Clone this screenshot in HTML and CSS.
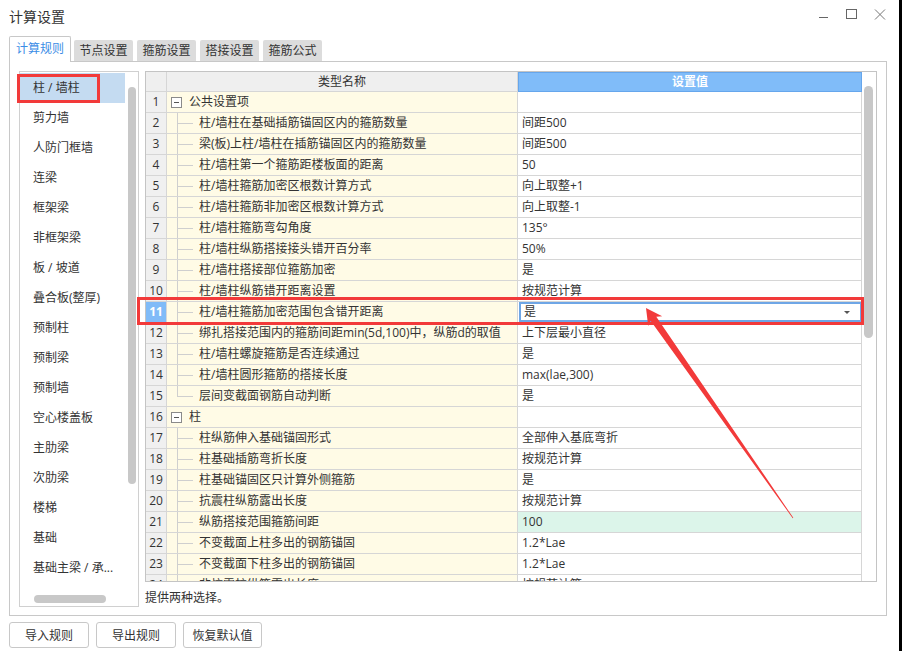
FILE: index.html
```html
<!DOCTYPE html>
<html lang="zh-CN">
<head>
<meta charset="utf-8">
<title>计算设置</title>
<link rel="stylesheet" href="styles.css">
</head>
<body>
<div class="win">
  <header class="titlebar">
    <span class="title">计算设置</span>
    <div class="ctrls">
      <svg class="ctrl" width="12" height="12" viewBox="0 0 12 12"><path d="M1 9.5H10" stroke="#666" stroke-width="1" fill="none"/></svg>
      <svg class="ctrl" width="12" height="12" viewBox="0 0 12 12"><rect x="0.5" y="1.5" width="10" height="9" fill="none" stroke="#666" stroke-width="1"/></svg>
      <svg class="ctrl" width="12" height="12" viewBox="0 0 12 12"><path d="M1 1.5L11 11.5M11 1.5L1 11.5" stroke="#777" stroke-width="1" fill="none"/></svg>
    </div>
  </header>
  <nav class="tabs">
    <div class="tab active">计算规则</div>
    <div class="tab">节点设置</div>
    <div class="tab">箍筋设置</div>
    <div class="tab">搭接设置</div>
    <div class="tab">箍筋公式</div>
  </nav>
  <section class="panel">
    <aside class="side">
      <div class="side-body">
        <ul class="items">
          <li class="item sel">柱 / 墙柱</li>
          <li class="item">剪力墙</li>
          <li class="item">人防门框墙</li>
          <li class="item">连梁</li>
          <li class="item">框架梁</li>
          <li class="item">非框架梁</li>
          <li class="item">板 / 坡道</li>
          <li class="item">叠合板(整厚)</li>
          <li class="item">预制柱</li>
          <li class="item">预制梁</li>
          <li class="item">预制墙</li>
          <li class="item">空心楼盖板</li>
          <li class="item">主肋梁</li>
          <li class="item">次肋梁</li>
          <li class="item">楼梯</li>
          <li class="item">基础</li>
          <li class="item">基础主梁 / 承...</li>
        </ul>
        <div class="vtrack"><div class="vthumb"></div></div>
      </div>
      <div class="htrack"><div class="hthumb"></div></div>
    </aside>
    <div class="main">
      <div class="grid">
        <div class="table">
          <div class="row head"><div class="c num"></div><div class="c name hname">类型名称</div><div class="c val hval">设置值</div></div>
          <div class="row"><div class="c num">1</div><div class="c name"><span class="tog"></span><span class="gtxt">公共设置项</span></div><div class="c val"></div></div>
          <div class="row"><div class="c num">2</div><div class="c name"><span class="br"></span><span class="txt">柱/墙柱在基础插筋锚固区内的箍筋数量</span></div><div class="c val">间距500</div></div>
          <div class="row"><div class="c num">3</div><div class="c name"><span class="br"></span><span class="txt">梁(板)上柱/墙柱在插筋锚固区内的箍筋数量</span></div><div class="c val">间距500</div></div>
          <div class="row"><div class="c num">4</div><div class="c name"><span class="br"></span><span class="txt">柱/墙柱第一个箍筋距楼板面的距离</span></div><div class="c val">50</div></div>
          <div class="row"><div class="c num">5</div><div class="c name"><span class="br"></span><span class="txt">柱/墙柱箍筋加密区根数计算方式</span></div><div class="c val">向上取整+1</div></div>
          <div class="row"><div class="c num">6</div><div class="c name"><span class="br"></span><span class="txt">柱/墙柱箍筋非加密区根数计算方式</span></div><div class="c val">向上取整-1</div></div>
          <div class="row"><div class="c num">7</div><div class="c name"><span class="br"></span><span class="txt">柱/墙柱箍筋弯勾角度</span></div><div class="c val">135°</div></div>
          <div class="row"><div class="c num">8</div><div class="c name"><span class="br"></span><span class="txt">柱/墙柱纵筋搭接接头错开百分率</span></div><div class="c val">50%</div></div>
          <div class="row"><div class="c num">9</div><div class="c name"><span class="br"></span><span class="txt">柱/墙柱搭接部位箍筋加密</span></div><div class="c val">是</div></div>
          <div class="row"><div class="c num">10</div><div class="c name"><span class="br"></span><span class="txt">柱/墙柱纵筋错开距离设置</span></div><div class="c val">按规范计算</div></div>
          <div class="row"><div class="c num cur">11</div><div class="c name"><span class="br"></span><span class="txt">柱/墙柱箍筋加密范围包含错开距离</span></div><div class="c val edit"><div class="editor"><span>是</span><span class="caret"></span></div></div></div>
          <div class="row"><div class="c num">12</div><div class="c name"><span class="br"></span><span class="txt">绑扎搭接范围内的箍筋间距min(5d,100)中，纵筋d的取值</span></div><div class="c val">上下层最小直径</div></div>
          <div class="row"><div class="c num">13</div><div class="c name"><span class="br"></span><span class="txt">柱/墙柱螺旋箍筋是否连续通过</span></div><div class="c val">是</div></div>
          <div class="row"><div class="c num">14</div><div class="c name"><span class="br"></span><span class="txt">柱/墙柱圆形箍筋的搭接长度</span></div><div class="c val">max(lae,300)</div></div>
          <div class="row"><div class="c num">15</div><div class="c name"><span class="br last"></span><span class="txt">层间变截面钢筋自动判断</span></div><div class="c val">是</div></div>
          <div class="row"><div class="c num">16</div><div class="c name"><span class="tog"></span><span class="gtxt">柱</span></div><div class="c val"></div></div>
          <div class="row"><div class="c num">17</div><div class="c name"><span class="br"></span><span class="txt">柱纵筋伸入基础锚固形式</span></div><div class="c val">全部伸入基底弯折</div></div>
          <div class="row"><div class="c num">18</div><div class="c name"><span class="br"></span><span class="txt">柱基础插筋弯折长度</span></div><div class="c val">按规范计算</div></div>
          <div class="row"><div class="c num">19</div><div class="c name"><span class="br"></span><span class="txt">柱基础锚固区只计算外侧箍筋</span></div><div class="c val">是</div></div>
          <div class="row"><div class="c num">20</div><div class="c name"><span class="br"></span><span class="txt">抗震柱纵筋露出长度</span></div><div class="c val">按规范计算</div></div>
          <div class="row"><div class="c num">21</div><div class="c name"><span class="br"></span><span class="txt">纵筋搭接范围箍筋间距</span></div><div class="c val mint">100</div></div>
          <div class="row"><div class="c num">22</div><div class="c name"><span class="br"></span><span class="txt">不变截面上柱多出的钢筋锚固</span></div><div class="c val">1.2*Lae</div></div>
          <div class="row"><div class="c num">23</div><div class="c name"><span class="br"></span><span class="txt">不变截面下柱多出的钢筋锚固</span></div><div class="c val">1.2*Lae</div></div>
          <div class="row"><div class="c num">24</div><div class="c name"><span class="br"></span><span class="txt">非抗震柱纵筋露出长度</span></div><div class="c val">按规范计算</div></div>
        </div>
        <div class="gscroll"><div class="gthumb"></div></div>
      </div>
      <div class="status">提供两种选择。</div>
    </div>
  </section>
  <footer class="btns">
    <button class="btn">导入规则</button>
    <button class="btn">导出规则</button>
    <button class="btn w79">恢复默认值</button>
  </footer>
</div>
<div class="mark mark-item"></div>
<div class="mark mark-row"></div>
<svg class="arrow" width="902" height="651" viewBox="0 0 902 651">
  <polygon points="646,308 662.2,316.2 656.3,316.7 793.3,517.8 792.7,518.2 650.6,320.7 648.2,326" fill="#f23a3a"/>
</svg>
</body>
</html>
```

FILE: styles.css
```css
* { box-sizing: border-box; }
html, body { margin: 0; padding: 0; }
body {
  width: 902px;
  height: 651px;
  background: #000;
  font-family: "Open Sans", "Noto Sans CJK SC", sans-serif;
  font-size: 12px;
  color: #333;
  overflow: hidden;
  position: relative;
}
.win {
  width: 899px;
  height: 651px;
  background: #fff;
  display: flex;
  flex-direction: column;
}
.titlebar {
  height: 36px;
  display: flex;
  justify-content: space-between;
  align-items: flex-start;
  padding-left: 9px;
}
.title {
  font-size: 14px;
  line-height: 20px;
  margin-top: 7px;
  color: #333;
}
.ctrls {
  display: flex;
  margin-top: 8px;
  margin-right: 13px;
}
.ctrl { display: block; }
.ctrl + .ctrl { margin-left: 16px; }

.tabs {
  height: 25px;
  display: flex;
  align-items: flex-end;
  padding-left: 9px;
  position: relative;
  z-index: 1;
}
.tab {
  width: 59px;
  height: 21px;
  margin-left: 4px;
  background: #dcdcdc;
  text-align: center;
  line-height: 21px;
  border-radius: 2px 2px 0 0;
  color: #333;
}
.tab.active {
  width: 62px;
  height: 26px;
  margin-left: 0;
  margin-right: -1px;
  margin-bottom: -1px;
  background: #fff;
  border: 1px solid #c8c8c8;
  border-bottom: none;
  color: #3b8de6;
  line-height: 24px;
}

.panel {
  width: 878px;
  height: 555px;
  margin-left: 9px;
  border: 1px solid #c8c8c8;
  padding: 9px 9px 8px 9px;
  display: flex;
}
.side {
  width: 120px;
  border: 1px solid #d0d0d0;
  display: flex;
  flex-direction: column;
}
.side-body {
  flex: 1;
  display: flex;
  overflow: hidden;
}
.items {
  list-style: none;
  margin: 0;
  padding: 1px 0 0 0;
  width: 105px;
}
.item {
  height: 30px;
  line-height: 30px;
  padding-left: 13px;
  white-space: nowrap;
  color: #333;
}
.item.sel { background: #c4dbf1; }
.vtrack {
  padding: 15px 0 0 3px;
}
.vthumb {
  width: 8px;
  height: 397px;
  background: #c8c8c8;
  border-radius: 4px;
}
.htrack {
  height: 17px;
  padding: 6px 0 0 14px;
}
.hthumb {
  width: 72px;
  height: 8px;
  background: #c8c8c8;
  border-radius: 4px;
}

.main {
  margin-left: 6px;
  width: 732px;
  display: flex;
  flex-direction: column;
}
.grid {
  width: 732px;
  height: 512px;
  border: 1px solid #c4c4c4;
  display: flex;
  overflow: hidden;
}
.table {
  width: 716px;
  display: flex;
  flex-direction: column;
}
.row {
  display: flex;
  height: 21px;
  flex-shrink: 0;
}
.c {
  border-right: 1px solid #d6d6d6;
  border-bottom: 1px solid #d6d6d6;
  line-height: 20px;
  white-space: nowrap;
  overflow: hidden;
}
.num {
  width: 21px;
  background: #f0f0f0;
  text-align: center;
  color: #333;
}
.num.cur {
  background: #80bbf8;
  color: #fff;
  font-weight: bold;
}
.name {
  width: 351px;
  background: #fffbe6;
  display: flex;
  align-items: center;
}
.val {
  width: 344px;
  background: #fff;
  padding-left: 4px;
}
.val.mint { background: #dcf5ea; }
.row.head { height: 20px; }
.row.head .c { line-height: 19px; }
.hname {
  background: #efefef;
  justify-content: center;
}
.row.head .num { background: #efefef; }
.hval {
  background: #80bcf9;
  border: 1px solid #66a6ec;
  border-left-color: #66a6ec;
  color: #fff;
  font-weight: bold;
  text-align: center;
  padding-left: 0;
  line-height: 18px !important;
}
.tog {
  width: 11px;
  height: 11px;
  margin-left: 4px;
  border: 1px solid #8a8a8a;
  background: #fff;
  position: relative;
  flex-shrink: 0;
}
.tog::after {
  content: "";
  position: absolute;
  left: 2px;
  top: 4px;
  width: 5px;
  height: 1px;
  background: #555;
}
.gtxt { margin-left: 7px; }
.br {
  align-self: stretch;
  width: 16px;
  margin-left: 10px;
  flex-shrink: 0;
  background:
    linear-gradient(#cfcfcf, #cfcfcf) left top / 1px 100% no-repeat,
    linear-gradient(#cfcfcf, #cfcfcf) left 10px / 100% 1px no-repeat;
}
.br.last {
  background:
    linear-gradient(#cfcfcf, #cfcfcf) left top / 1px 11px no-repeat,
    linear-gradient(#cfcfcf, #cfcfcf) left 10px / 100% 1px no-repeat;
}
.txt { margin-left: 6px; }
.val.edit { padding: 0; }
.editor {
  height: 20px;
  width: 343px;
  margin-left: 1px;
  border: 2px solid #6ea6e6;
  display: flex;
  align-items: center;
  justify-content: space-between;
  padding: 0 10px 0 3px;
  line-height: 16px;
}
.caret {
  width: 0;
  height: 0;
  border-left: 3px solid transparent;
  border-right: 3px solid transparent;
  border-top: 3px solid #555;
}
.gscroll {
  width: 14px;
  padding: 14px 0 0 2px;
}
.gthumb {
  width: 9px;
  height: 252px;
  background: #c8c8c8;
  border-radius: 5px;
}
.status {
  margin-top: 7px;
  line-height: 18px;
  color: #333;
}

.btns {
  display: flex;
  margin-top: 6px;
  padding-left: 9px;
  gap: 7px;
}
.btn {
  width: 80px;
  height: 26px;
  background: #fff;
  border: 1px solid #c8c8c8;
  border-radius: 3px;
  font-family: "Open Sans", "Noto Sans CJK SC", sans-serif;
  font-size: 12px;
  color: #333;
  padding: 0;
}
.btn.w79 { width: 79px; }

.mark {
  position: absolute;
  border: 3px solid #f23a3a;
  pointer-events: none;
}
.mark-item { left: 17px; top: 74px; width: 83px; height: 29px; }
.mark-row { left: 137px; top: 297px; width: 727px; height: 28px; }
.arrow {
  position: absolute;
  left: 0;
  top: 0;
  pointer-events: none;
}
```
